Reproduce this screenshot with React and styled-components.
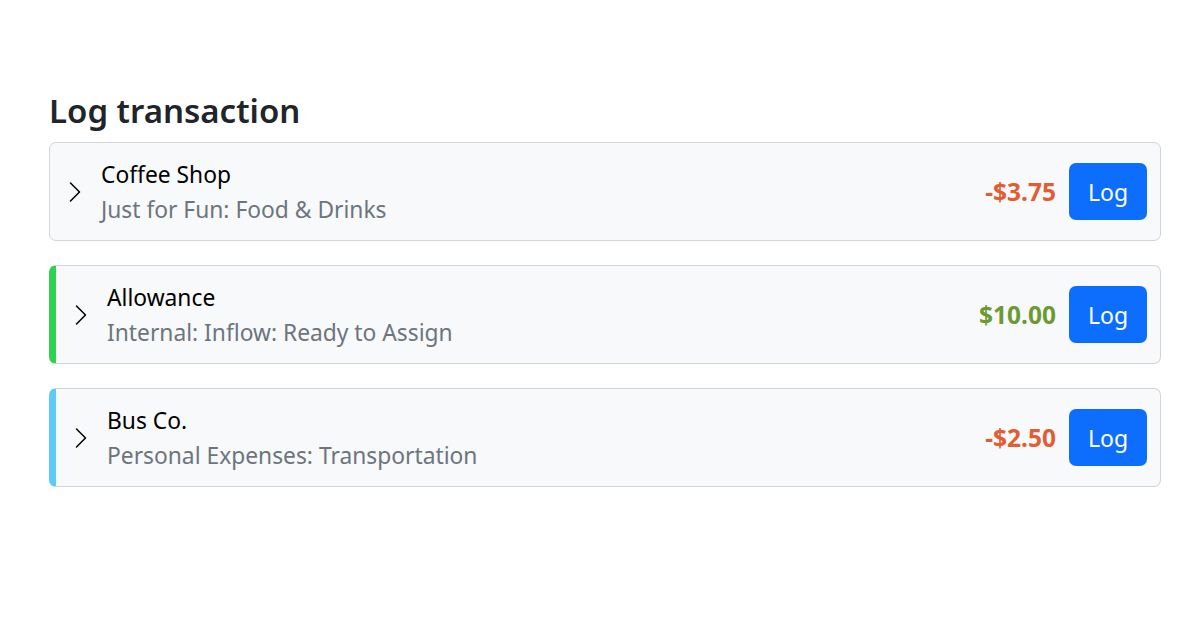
import React from "react";
import styled, { createGlobalStyle } from "styled-components";

const Global = createGlobalStyle`
  html, body { margin: 0; padding: 0; background: #fff; }
  body { font-family: "Noto Sans", "Open Sans", sans-serif; color: #212529; }
`;

const Page = styled.main`
  padding: 89px 39px 0 49px;
`;

const Heading = styled.h2`
  margin: 0 0 9px;
  font-size: 33px;
  font-weight: 600;
  line-height: 44px;
  color: #212529;
`;

const List = styled.div`
  display: flex;
  flex-direction: column;
  gap: 24px;
`;

const Card = styled.div`
  display: flex;
  align-items: center;
  box-sizing: border-box;
  height: 99px;
  background: #f8f9fa;
  border: 1px solid #d2d4d6;
  border-left: ${(p) => (p.$accent ? `7px solid ${p.$accent}` : "1px solid #d2d4d6")};
  border-radius: 7px;
  padding: 0 13px 0 13px;
`;

const Toggle = styled.button`
  display: flex;
  align-items: center;
  justify-content: center;
  width: 24px;
  height: 24px;
  padding: 0;
  margin-right: 14px;
  border: 0;
  background: none;
  color: #000;
  cursor: pointer;
`;

const Info = styled.div`
  flex: 1;
  display: flex;
  flex-direction: column;
  min-width: 0;
`;

const Payee = styled.div`
  font-size: 22.8px;
  line-height: 35px;
  color: #000;
`;

const Category = styled.div`
  font-size: 22.8px;
  line-height: 35px;
  color: #6c757d;
`;

const Amount = styled.span`
  font-size: 24.5px;
  font-weight: 700;
  color: ${(p) => (p.$positive ? "#6b9a33" : "#e25d33")};
  margin-right: 13px;
`;

const LogButton = styled.button`
  box-sizing: border-box;
  width: 78px;
  height: 57px;
  border: 0;
  border-radius: 7px;
  background: #0d6efd;
  color: #fff;
  font-family: inherit;
  font-size: 23px;
  cursor: pointer;
`;

const Chevron = () => (
  <svg width="24" height="24" viewBox="0 0 16 16" fill="currentColor">
    <path d="M4.646 1.646a.5.5 0 0 1 .708 0l6 6a.5.5 0 0 1 0 .708l-6 6a.5.5 0 0 1-.708-.708L10.293 8 4.646 2.354a.5.5 0 0 1 0-.708z" />
  </svg>
);

const rows = [
  { payee: "Coffee Shop", category: "Just for Fun: Food & Drinks", amount: "-$3.75", positive: false },
  { payee: "Allowance", category: "Internal: Inflow: Ready to Assign", amount: "$10.00", positive: true, accent: "#2fd24f" },
  { payee: "Bus Co.", category: "Personal Expenses: Transportation", amount: "-$2.50", positive: false, accent: "#5ccbf5" },
];

export default function App() {
  return (
    <>
      <Global />
      <Page>
        <Heading>Log transaction</Heading>
        <List>
          {rows.map((r) => (
            <Card key={r.payee} $accent={r.accent}>
              <Toggle aria-label="Expand">
                <Chevron />
              </Toggle>
              <Info>
                <Payee>{r.payee}</Payee>
                <Category>{r.category}</Category>
              </Info>
              <Amount $positive={r.positive}>{r.amount}</Amount>
              <LogButton>Log</LogButton>
            </Card>
          ))}
        </List>
      </Page>
    </>
  );
}
